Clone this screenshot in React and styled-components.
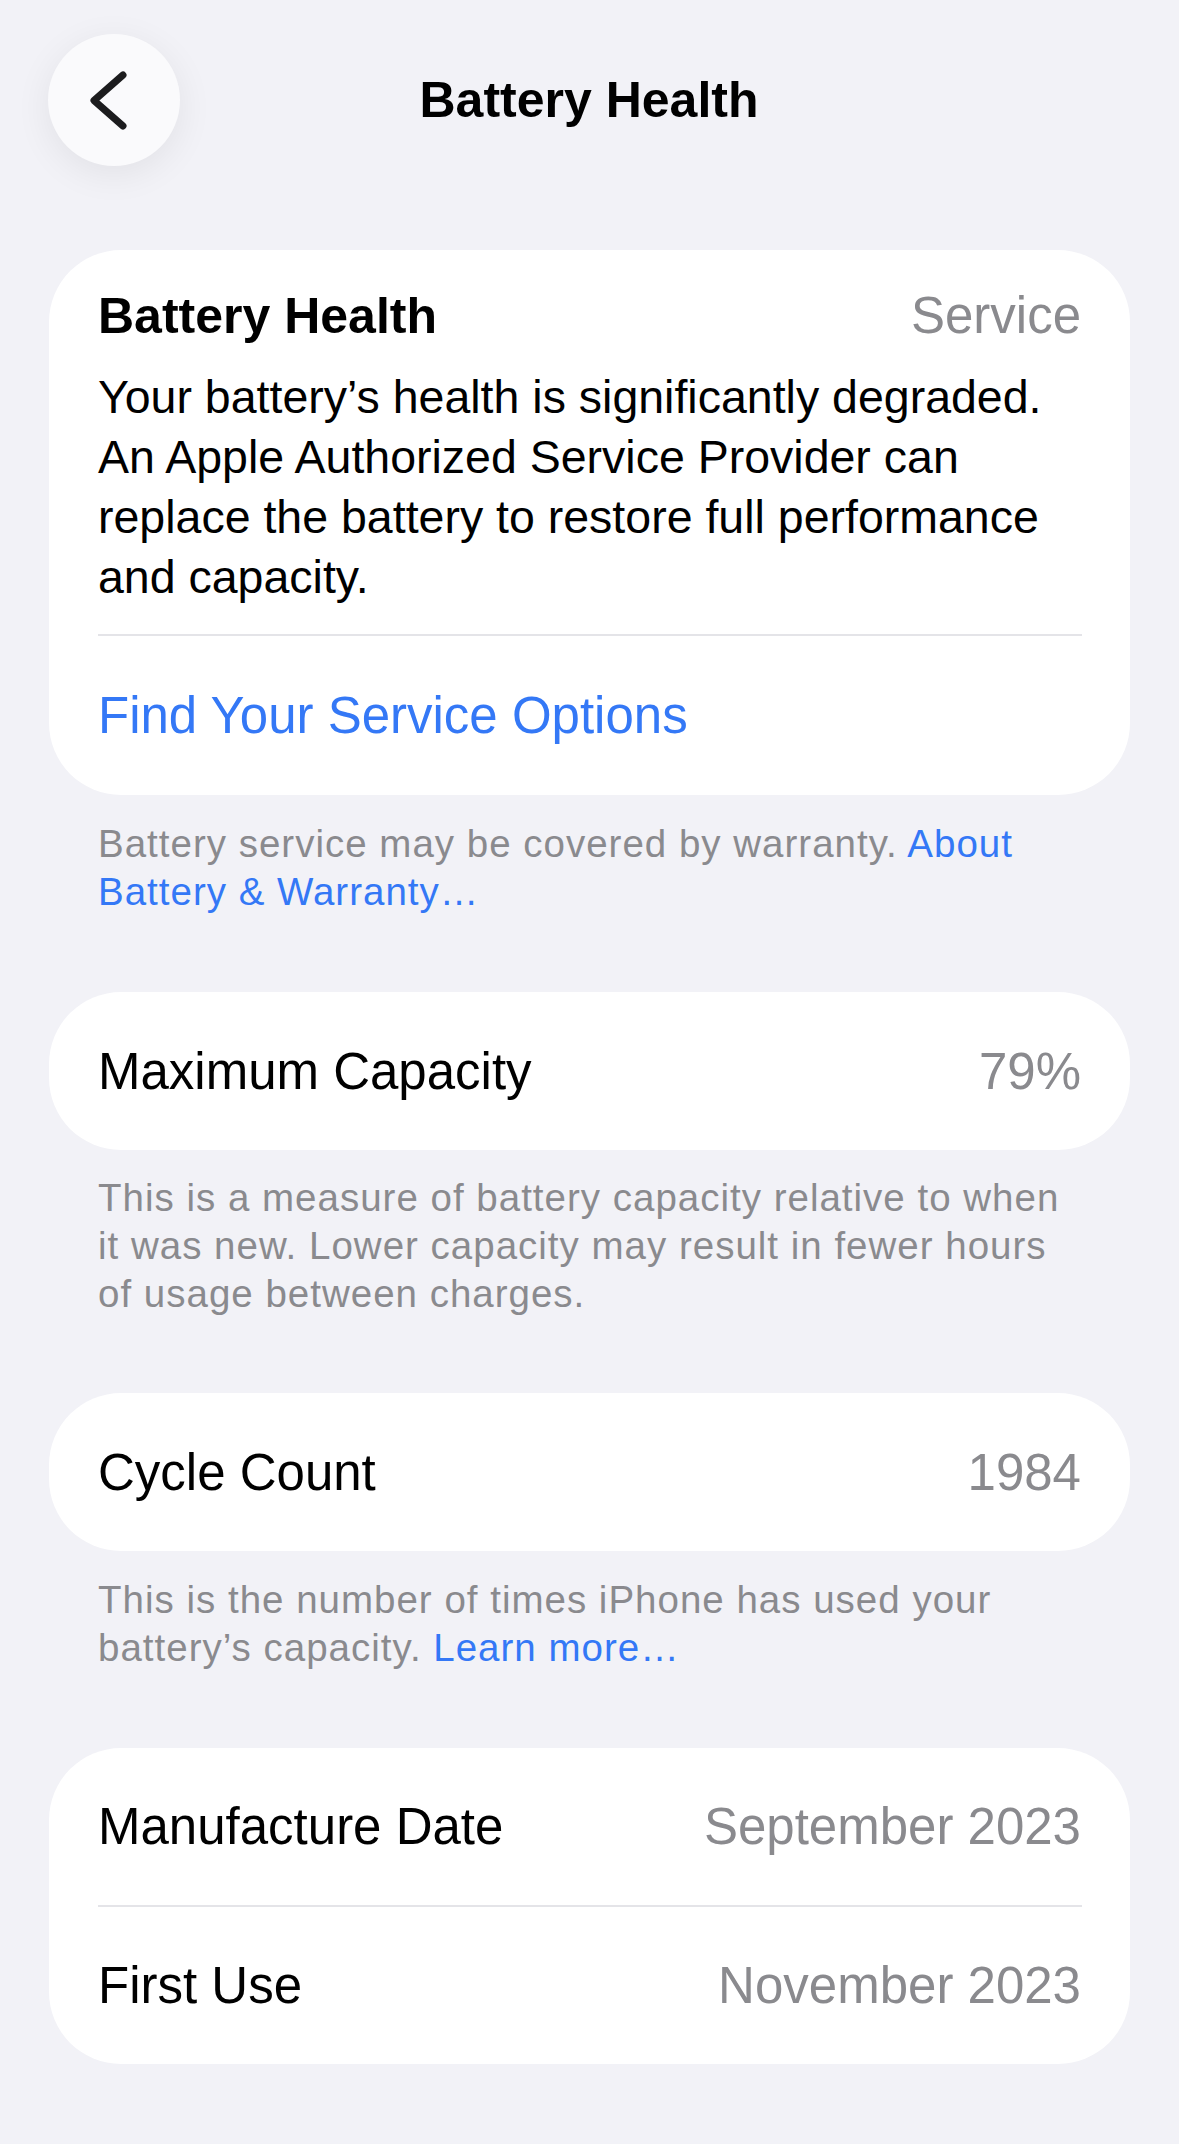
import styled, { createGlobalStyle } from "styled-components";

const GlobalStyle = createGlobalStyle`
  body {
    margin: 0;
    background: #f2f2f7;
    font-family: "Liberation Sans", Arial, sans-serif;
    color: #000;
  }
`;

const Page = styled.div`
  box-sizing: border-box;
  min-height: 2144px;
  padding: 33px 49px 80px 49px;
`;

const NavBar = styled.div`
  display: grid;
  grid-template-columns: 1fr auto 1fr;
  align-items: center;
  height: 133px;
  margin: 0 0 84px -1px;
`;

const BackButton = styled.button`
  width: 132px;
  height: 132px;
  padding: 0;
  border: none;
  border-radius: 50%;
  background: #fafafc;
  box-shadow: 0 8px 36px rgba(0, 0, 0, 0.07);
  display: flex;
  align-items: center;
  justify-content: center;
`;

const NavTitle = styled.div`
  font-size: 50px;
  font-weight: 700;
  line-height: 60px;
`;

const Card = styled.div`
  background: #fff;
  border-radius: 72px;
  overflow: hidden;
`;

const CardTop = styled.div`
  padding: 36px 49px 27px 49px;
`;

const HeaderRow = styled.div`
  display: flex;
  justify-content: space-between;
  align-items: baseline;
  line-height: 60px;
`;

const CardTitle = styled.div`
  font-size: 50px;
  font-weight: 700;
`;

const Value = styled.div`
  font-size: 51px;
  color: #8a8a8e;
`;

const Description = styled.p`
  margin: 21px 0 0 0;
  font-size: 46.5px;
  line-height: 60px;
`;

const Divider = styled.div`
  height: 2px;
  background: #e4e4e8;
  margin: 0 48px 0 49px;
`;

const LinkRow = styled.div`
  height: 159px;
  padding: 0 49px;
  display: flex;
  align-items: center;
  font-size: 51px;
  color: #3478f6;
`;

const Row = styled.div`
  height: ${(p) => p.$h || 158}px;
  padding: 0 49px;
  display: flex;
  justify-content: space-between;
  align-items: center;
  font-size: 51px;
`;

const Footer = styled.p`
  margin: 0 0 ${(p) => p.$gap || 76}px 0;
  padding: ${(p) => p.$top || 25}px 49px 0 49px;
  font-size: 38.5px;
  letter-spacing: 1px;
  line-height: 48px;
  color: #8a8a8e;
`;

const Link = styled.span`
  color: #3478f6;
`;

function Chevron() {
  return (
    <svg width="132" height="132" viewBox="0 0 132 132">
      <polyline
        points="75,41 46,66.5 75,92"
        fill="none"
        stroke="#1c1c1e"
        strokeWidth="7"
        strokeLinecap="round"
        strokeLinejoin="round"
      />
    </svg>
  );
}

export default function App() {
  return (
    <Page>
      <GlobalStyle />
      <NavBar>
        <div>
          <BackButton aria-label="Back">
            <Chevron />
          </BackButton>
        </div>
        <NavTitle>Battery Health</NavTitle>
        <div />
      </NavBar>

      <Card>
        <CardTop>
          <HeaderRow>
            <CardTitle>Battery Health</CardTitle>
            <Value>Service</Value>
          </HeaderRow>
          <Description>
            Your battery’s health is significantly degraded.
            <br />
            An Apple Authorized Service Provider can
            <br />
            replace the battery to restore full performance
            <br />
            and capacity.
          </Description>
        </CardTop>
        <Divider />
        <LinkRow>Find Your Service Options</LinkRow>
      </Card>
      <Footer>
        Battery service may be covered by warranty. <Link>About</Link>
        <br />
        <Link>Battery &amp; Warranty…</Link>
      </Footer>

      <Card>
        <Row>
          <span>Maximum Capacity</span>
          <Value>79%</Value>
        </Row>
      </Card>
      <Footer $top={24} $gap={75}>
        This is a measure of battery capacity relative to when
        <br />
        it was new. Lower capacity may result in fewer hours
        <br />
        of usage between charges.
      </Footer>

      <Card>
        <Row>
          <span>Cycle Count</span>
          <Value>1984</Value>
        </Row>
      </Card>
      <Footer $gap={76}>
        This is the number of times iPhone has used your
        <br />
        battery’s capacity. <Link>Learn more…</Link>
      </Footer>

      <Card>
        <Row $h={157}>
          <span>Manufacture Date</span>
          <Value>September 2023</Value>
        </Row>
        <Divider />
        <Row $h={157}>
          <span>First Use</span>
          <Value>November 2023</Value>
        </Row>
      </Card>
    </Page>
  );
}
